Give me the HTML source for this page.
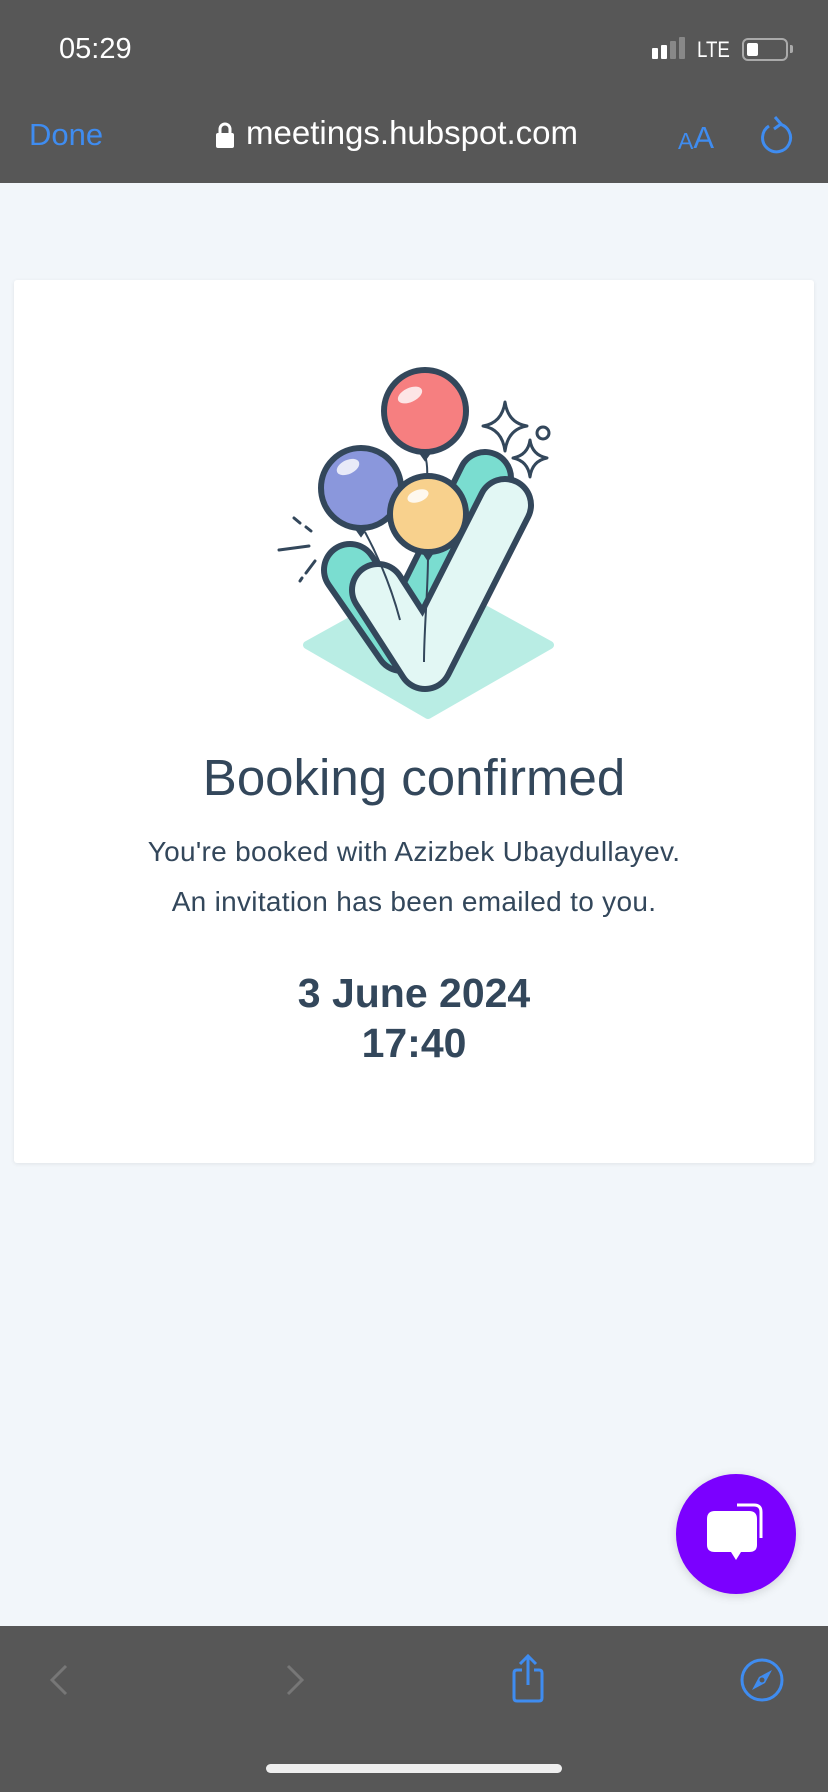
<!DOCTYPE html>
<html><head><meta charset="utf-8"><style>
*{margin:0;padding:0;box-sizing:border-box}
body{width:828px;height:1792px;background:#f2f6fa;font-family:"Liberation Sans",sans-serif;position:relative;overflow:hidden}
.hdr{position:absolute;left:0;top:0;width:828px;height:183px;background:#575757}
.bot{position:absolute;left:0;top:1626px;width:828px;height:166px;background:#575757}
.card{position:absolute;left:14px;top:280px;width:800px;height:883px;background:#fff;border-radius:3px;box-shadow:0 1px 4px rgba(0,0,0,.08)}
.t{position:absolute;left:0;width:828px;text-align:center;color:#33475b}
</style></head><body>
<div class="hdr"></div>
<div style="position:absolute;left:59px;top:33px;color:#fff;font-size:29px;">05:29</div>
<div style="position:absolute;left:652px;top:48px;width:6px;height:11px;background:#fff;border-radius:1px"></div>
<div style="position:absolute;left:661px;top:45px;width:6px;height:14px;background:#fff;border-radius:1px"></div>
<div style="position:absolute;left:670px;top:41px;width:6px;height:18px;background:#888;border-radius:1px"></div>
<div style="position:absolute;left:679px;top:37px;width:6px;height:22px;background:#888;border-radius:1px"></div>
<div style="position:absolute;left:697px;top:37px;color:#fff;font-size:22px;transform:scaleX(.85);transform-origin:left">LTE</div>
<div style="position:absolute;left:742px;top:38px;width:46px;height:23px;border:2px solid #aaa;border-radius:6px"><div style="margin:3px;width:11px;height:13px;background:#fff;border-radius:2px"></div></div>
<div style="position:absolute;left:790px;top:45px;width:3px;height:8px;background:#aaa;border-radius:0 2px 2px 0"></div>
<div style="position:absolute;left:29px;top:117px;color:#3f8cf0;font-size:31px;">Done</div>
<svg style="position:absolute;left:215px;top:121px" width="20" height="28"><path d="M5 12V8a5 5 0 0 1 10 0v4" stroke="#fff" stroke-width="3" fill="none"/><rect x="1" y="12" width="18" height="15" rx="2" fill="#fff"/></svg>
<div style="position:absolute;left:246px;top:114px;color:#fff;font-size:33px;">meetings.hubspot.com</div>
<div style="position:absolute;left:678px;top:121px;color:#3f8cf0;font-size:23px;">A<span style="font-size:31px;position:relative;top:-1px">A</span></div>
<svg style="position:absolute;left:757px;top:114px" width="36" height="42"><path d="M12 12 A14 14 0 1 0 22 10" stroke="#3f8cf0" stroke-width="3" fill="none"/><path d="M18 3 L24 10 L17 15" stroke="#3f8cf0" stroke-width="3" fill="none"/></svg>

<div class="card"></div>
<svg style="position:absolute;left:0;top:0" width="828" height="760">
<path d="M307 645 L428 578 L550 645 L428 715 Z" fill="#b9ede4" stroke="#b9ede4" stroke-width="8" stroke-linejoin="round"/>
<g stroke-linecap="round" stroke-linejoin="round" fill="none">
<polyline points="350,570 402,645 485,478" stroke="#33475b" stroke-width="58"/>
<polyline points="350,570 402,645 485,478" stroke="#7addd0" stroke-width="46"/>
<polyline points="378,590 425,663 505,505" stroke="#33475b" stroke-width="58"/>
<polyline points="378,590 425,663 505,505" stroke="#e2f7f4" stroke-width="46"/>
</g>
<g stroke="#33475b" stroke-width="2" fill="none">
<path d="M425 455 C432 480 420 500 423 520"/>
<path d="M365 532 C380 560 392 590 400 620"/>
<path d="M428 556 C428 590 424 630 424 662"/>
</g>
<g stroke="#33475b" stroke-width="6">
<circle cx="425" cy="411" r="41" fill="#f67f80"/>
<circle cx="361" cy="488" r="40" fill="#8a97dc"/>
<circle cx="428" cy="514" r="38" fill="#f8d18d"/>
</g>
<path d="M420 452 l5 7 l5 -7z M356 528 l5 7 l5 -7z M424 553 l4 6 l4 -6z" fill="#33475b" stroke="#33475b" stroke-width="3"/>
<ellipse cx="410" cy="395" rx="13" ry="7" fill="#fff" opacity=".8" transform="rotate(-25 410 395)"/>
<ellipse cx="348" cy="467" rx="12" ry="7" fill="#fff" opacity=".8" transform="rotate(-25 348 467)"/>
<ellipse cx="418" cy="496" rx="11" ry="6" fill="#fff" opacity=".85" transform="rotate(-20 418 496)"/>
<g stroke="#33475b" stroke-width="3" fill="#fff" stroke-linejoin="round">
<path d="M505 402 Q508 423 527 426 Q508 429 505 451 Q502 429 483 426 Q502 423 505 402Z"/>
<path d="M530 440 Q532 455 547 458 Q532 461 530 477 Q528 461 513 458 Q528 455 530 440Z"/>
<circle cx="543" cy="433" r="6"/>
</g>
<g stroke="#33475b" stroke-width="3" stroke-linecap="round">
<line x1="279" y1="550" x2="309" y2="546"/><line x1="294" y1="518" x2="300" y2="523"/><line x1="306" y1="527" x2="311" y2="531"/><line x1="300" y1="581" x2="302" y2="578"/><line x1="306" y1="573" x2="315" y2="561"/>
</g>
</svg>
<div class="t" style="top:748px;font-size:51px;">Booking confirmed</div>
<div class="t" style="top:836px;font-size:28px;letter-spacing:0.3px">You're booked with Azizbek Ubaydullayev.</div>
<div class="t" style="top:886px;font-size:28px;letter-spacing:0.3px">An invitation has been emailed to you.</div>
<div class="t" style="top:970px;font-size:41px;font-weight:bold;">3 June 2024</div>
<div class="t" style="top:1020px;font-size:41px;font-weight:bold;">17:40</div>

<div style="position:absolute;left:676px;top:1474px;width:120px;height:120px;border-radius:50%;background:#7b00ff;box-shadow:0 2px 10px rgba(0,0,0,.15)"></div>
<svg style="position:absolute;left:700px;top:1500px" width="70" height="70"><path d="M37 5 H54 Q61 5 61 12 V38" stroke="#fff" stroke-width="3" fill="none"/><path d="M15 11 H49 Q57 11 57 19 V45 Q57 52 49 52 H41 L36 60 L31 52 H15 Q7 52 7 45 V19 Q7 11 15 11Z" fill="#fff"/></svg>

<div class="bot"></div>
<svg style="position:absolute;left:44px;top:1662px" width="30" height="36"><path d="M22 4 L8 18 L22 32" stroke="#777" stroke-width="3" fill="none"/></svg>
<svg style="position:absolute;left:280px;top:1662px" width="30" height="36"><path d="M8 4 L22 18 L8 32" stroke="#777" stroke-width="3" fill="none"/></svg>
<svg style="position:absolute;left:505px;top:1652px" width="46" height="52"><path d="M17 18 H12 Q9 18 9 21 V46 Q9 49 12 49 H34 Q37 49 37 46 V21 Q37 18 34 18 H29" stroke="#3f8cf0" stroke-width="3" fill="none"/><path d="M23 33 V4 M15 12 L23 4 L31 12" stroke="#3f8cf0" stroke-width="3" fill="none"/></svg>
<svg style="position:absolute;left:738px;top:1656px" width="48" height="48"><circle cx="24" cy="24" r="20" stroke="#3f8cf0" stroke-width="3" fill="none"/><path d="M34 14 L27 27 L14 34 L21 21Z" fill="#3f8cf0"/><circle cx="24" cy="24" r="2.5" fill="#575757"/></svg>
<div style="position:absolute;left:266px;top:1764px;width:296px;height:9px;border-radius:5px;background:#eee"></div>
</body></html>
